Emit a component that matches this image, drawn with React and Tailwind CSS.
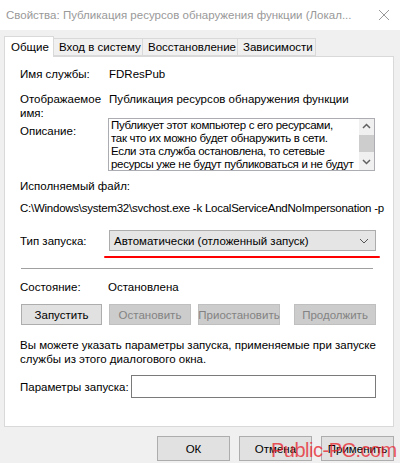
import React from 'react';

const font = { fontFamily: '"Liberation Sans", Arial, sans-serif' };

const descLines = [
  'Публикует этот компьютер с его ресурсами,',
  'так что их можно будет обнаружить в сети.',
  'Если эта служба остановлена, то сетевые',
  'ресурсы уже не будут публиковаться и не будут',
];

function Btn({ children, disabled, className = '' }) {
  return (
    <div
      className={`flex items-center justify-center border whitespace-nowrap ${
        disabled ? 'bg-[#cccccc] border-[#bfbfbf] text-[#838383]' : 'bg-[#e1e1e1] border-[#adadad] text-black'
      } ${className}`}
    >
      {children}
    </div>
  );
}

export default function App() {
  return (
    <div className="w-[400px] h-[463px] bg-[#f0f0f0] relative overflow-hidden text-[11.5px] text-black leading-[14px]" style={font}>
      {/* заголовок окна */}
      <div className="h-[30px] bg-white flex items-center pl-[6px] pr-[10px]">
        <span className="flex-1 text-[#999999] text-[11.5px] whitespace-nowrap overflow-hidden">
          Свойства: Публикация ресурсов обнаружения функции (Локал...
        </span>
        <svg width="12" height="12" viewBox="0 0 12 12" className="ml-2">
          <path d="M1 1 L11 11 M11 1 L1 11" stroke="#999" strokeWidth="1" />
        </svg>
      </div>

      {/* вкладки */}
      <div className="px-[4px] pt-[6px] flex items-end">
        <div className="w-[50px] h-[21px] pl-[6px] bg-white border border-b-0 border-[#d9d9d9] flex items-center relative z-10 -mb-px">
          Общие
        </div>
        <div className="flex h-[18px]">
          <div className="w-[89px] pl-[5px] border border-l-0 border-[#d9d9d9] flex items-center whitespace-nowrap">Вход в систему</div>
          <div className="w-[95px] pl-[5px] border border-l-0 border-[#d9d9d9] flex items-center">Восстановление</div>
          <div className="w-[78px] pl-[5px] border border-l-0 border-[#d9d9d9] flex items-center">Зависимости</div>
        </div>
      </div>

      {/* панель */}
      <div className="mx-[4px] w-[390px] h-[371px] bg-white border border-[#d9d9d9] pl-[15px] pr-[17px] pt-[10px]">
        <div className="flex">
          <span className="w-[89px]">Имя службы:</span>
          <span>FDResPub</span>
        </div>
        <div className="flex mt-[11px]">
          <span className="w-[89px]">Отображаемое<br />имя:</span>
          <span>Публикация ресурсов обнаружения функции</span>
        </div>
        <div className="flex -mt-[2px]">
          <span className="w-[88px] pt-[6px]">Описание:</span>
          <div className="w-[267px] h-[53px] border border-[#abadb3] flex">
            <div className="flex-1 pl-[2px] leading-[13px] tracking-[-0.3px] overflow-hidden">
              {descLines.map((line) => (
                <div key={line} className="whitespace-nowrap">{line}</div>
              ))}
            </div>
            <div className="w-[15px] bg-[#f0f0f0] flex flex-col items-center">
              <svg width="9" height="16" viewBox="0 0 9 16">
                <path d="M1 9 L4.5 5.5 L8 9" stroke="#606060" strokeWidth="1.5" fill="none" />
              </svg>
              <div className="w-[15px] h-[17px] bg-[#cdcdcd]" />
              <div className="flex-1" />
              <svg width="9" height="16" viewBox="0 0 9 16">
                <path d="M1 6 L4.5 9.5 L8 6" stroke="#606060" strokeWidth="1.5" fill="none" />
              </svg>
            </div>
          </div>
        </div>
        <div className="mt-[8px]">Исполняемый файл:</div>
        <div className="mt-[8px] whitespace-nowrap tracking-[-0.25px]">
          C:\Windows\system32\svchost.exe -k LocalServiceAndNoImpersonation -p
        </div>
        <div className="flex items-center mt-[15px]">
          <span className="w-[89px]">Тип запуска:</span>
          <div className="w-[267px] h-[21px] bg-[#e5e5e5] border border-[#acacac] flex items-center pl-[4px] pr-[6px]">
            <span className="flex-1">Автоматически (отложенный запуск)</span>
            <svg width="10" height="6" viewBox="0 0 10 6">
              <path d="M1 1 L5 5 L9 1" stroke="#555" strokeWidth="1" fill="none" />
            </svg>
          </div>
        </div>
        <div className="ml-[84px] w-[276px] h-[2px] bg-[#ff0000] rounded-full mt-[5px]" />
        <div className="h-px bg-[#a0a0a0] mt-[10px] w-[352px] ml-[1px]" />

        <div className="flex mt-[11px]">
          <span className="w-[88px]">Состояние:</span>
          <span>Остановлена</span>
        </div>
        <div className="flex mt-[10px] h-[21px]">
          <Btn className="w-[81px] ml-[1px]">Запустить</Btn>
          <Btn disabled className="w-[82px] ml-[7px]">Остановить</Btn>
          <Btn disabled className="w-[82px] ml-[7px]">Приостановить</Btn>
          <Btn disabled className="w-[82px] ml-[14px]">Продолжить</Btn>
        </div>
        <div className="mt-[13px]">
          Вы можете указать параметры запуска, применяемые при запуске службы из этого диалогового окна.
        </div>
        <div className="flex items-center mt-[9px]">
          <span className="w-[111px] whitespace-nowrap">Параметры запуска:</span>
          <div className="w-[246px] h-[23px] border border-[#7a7a7a] bg-white" />
        </div>
      </div>

      {/* нижние кнопки */}
      <div className="flex justify-end pr-[6px] mt-[9px] gap-[9px]">
        <Btn className="w-[73px] h-[25px]">ОК</Btn>
        <Btn className="w-[73px] h-[25px]">Отмена</Btn>
        <Btn className="w-[73px] h-[25px]">Применить</Btn>
      </div>

      {/* водяной знак */}
      <div
        className="absolute left-[271px] top-[440px] text-[20px] leading-[20px] tracking-[-0.5px] text-[#e8202a]/75 whitespace-nowrap"
        style={{ fontFamily: '"Liberation Sans", Arial, sans-serif' }}
      >
        Public-PC.com
      </div>
    </div>
  );
}
